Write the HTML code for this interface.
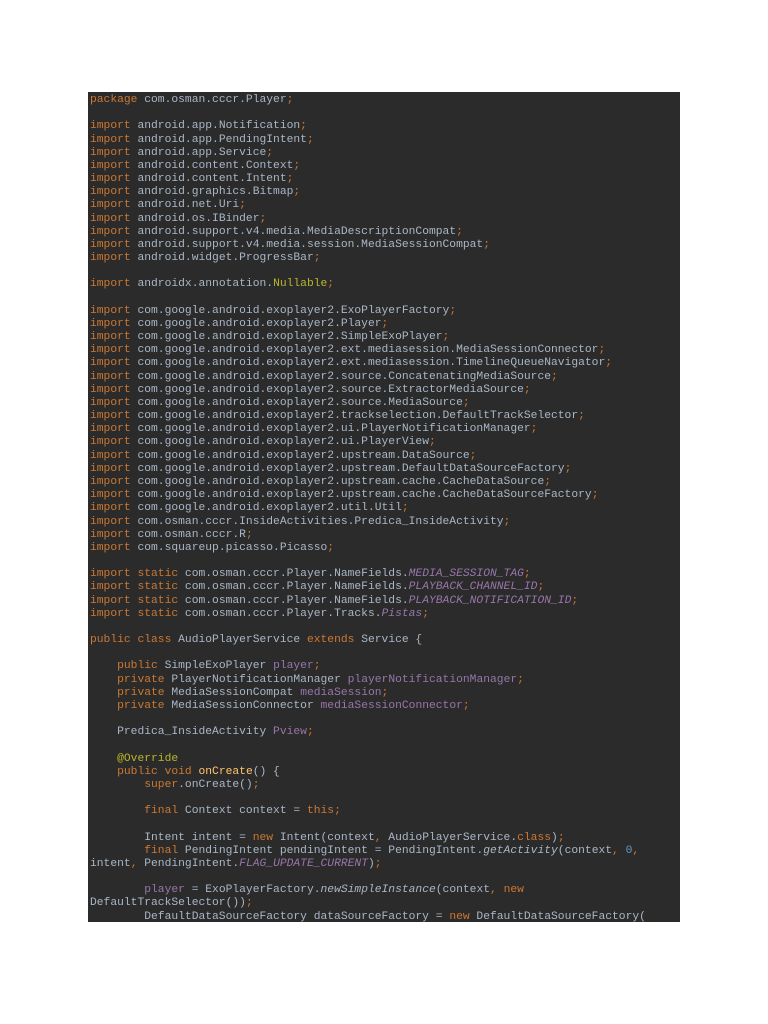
<!DOCTYPE html>
<html><head><meta charset="utf-8"><style>
html,body{margin:0;padding:0;background:#fff;width:768px;height:1024px;overflow:hidden}
#c{position:absolute;left:88px;top:92px;width:592px;height:830px;background:#2b2b2b;box-sizing:border-box;padding-left:2px;padding-top:2px;overflow:hidden}
pre{margin:0;font-family:"Liberation Mono",monospace;font-size:11.3px;line-height:13.17px;color:#a9b7c6;white-space:pre}
.k{color:#cc7832}.p{color:#9876aa}.i{color:#9876aa;font-style:italic}.a{color:#bbb529}.f{color:#ffc66d}.n{color:#6897bb}.m{font-style:italic}
</style></head><body><div id="c"><pre><span class="k">package</span> com.osman.cccr.Player<span class="k">;</span>

<span class="k">import</span> android.app.Notification<span class="k">;</span>
<span class="k">import</span> android.app.PendingIntent<span class="k">;</span>
<span class="k">import</span> android.app.Service<span class="k">;</span>
<span class="k">import</span> android.content.Context<span class="k">;</span>
<span class="k">import</span> android.content.Intent<span class="k">;</span>
<span class="k">import</span> android.graphics.Bitmap<span class="k">;</span>
<span class="k">import</span> android.net.Uri<span class="k">;</span>
<span class="k">import</span> android.os.IBinder<span class="k">;</span>
<span class="k">import</span> android.support.v4.media.MediaDescriptionCompat<span class="k">;</span>
<span class="k">import</span> android.support.v4.media.session.MediaSessionCompat<span class="k">;</span>
<span class="k">import</span> android.widget.ProgressBar<span class="k">;</span>

<span class="k">import</span> androidx.annotation.<span class="a">Nullable</span><span class="k">;</span>

<span class="k">import</span> com.google.android.exoplayer2.ExoPlayerFactory<span class="k">;</span>
<span class="k">import</span> com.google.android.exoplayer2.Player<span class="k">;</span>
<span class="k">import</span> com.google.android.exoplayer2.SimpleExoPlayer<span class="k">;</span>
<span class="k">import</span> com.google.android.exoplayer2.ext.mediasession.MediaSessionConnector<span class="k">;</span>
<span class="k">import</span> com.google.android.exoplayer2.ext.mediasession.TimelineQueueNavigator<span class="k">;</span>
<span class="k">import</span> com.google.android.exoplayer2.source.ConcatenatingMediaSource<span class="k">;</span>
<span class="k">import</span> com.google.android.exoplayer2.source.ExtractorMediaSource<span class="k">;</span>
<span class="k">import</span> com.google.android.exoplayer2.source.MediaSource<span class="k">;</span>
<span class="k">import</span> com.google.android.exoplayer2.trackselection.DefaultTrackSelector<span class="k">;</span>
<span class="k">import</span> com.google.android.exoplayer2.ui.PlayerNotificationManager<span class="k">;</span>
<span class="k">import</span> com.google.android.exoplayer2.ui.PlayerView<span class="k">;</span>
<span class="k">import</span> com.google.android.exoplayer2.upstream.DataSource<span class="k">;</span>
<span class="k">import</span> com.google.android.exoplayer2.upstream.DefaultDataSourceFactory<span class="k">;</span>
<span class="k">import</span> com.google.android.exoplayer2.upstream.cache.CacheDataSource<span class="k">;</span>
<span class="k">import</span> com.google.android.exoplayer2.upstream.cache.CacheDataSourceFactory<span class="k">;</span>
<span class="k">import</span> com.google.android.exoplayer2.util.Util<span class="k">;</span>
<span class="k">import</span> com.osman.cccr.InsideActivities.Predica_InsideActivity<span class="k">;</span>
<span class="k">import</span> com.osman.cccr.R<span class="k">;</span>
<span class="k">import</span> com.squareup.picasso.Picasso<span class="k">;</span>

<span class="k">import static</span> com.osman.cccr.Player.NameFields.<span class="i">MEDIA_SESSION_TAG</span><span class="k">;</span>
<span class="k">import static</span> com.osman.cccr.Player.NameFields.<span class="i">PLAYBACK_CHANNEL_ID</span><span class="k">;</span>
<span class="k">import static</span> com.osman.cccr.Player.NameFields.<span class="i">PLAYBACK_NOTIFICATION_ID</span><span class="k">;</span>
<span class="k">import static</span> com.osman.cccr.Player.Tracks.<span class="i">Pistas</span><span class="k">;</span>

<span class="k">public class</span> AudioPlayerService <span class="k">extends</span> Service {

    <span class="k">public</span> SimpleExoPlayer <span class="p">player</span><span class="k">;</span>
    <span class="k">private</span> PlayerNotificationManager <span class="p">playerNotificationManager</span><span class="k">;</span>
    <span class="k">private</span> MediaSessionCompat <span class="p">mediaSession</span><span class="k">;</span>
    <span class="k">private</span> MediaSessionConnector <span class="p">mediaSessionConnector</span><span class="k">;</span>

    Predica_InsideActivity <span class="p">Pview</span><span class="k">;</span>

    <span class="a">@Override</span>
    <span class="k">public void</span> <span class="f">onCreate</span>() {
        <span class="k">super</span>.onCreate()<span class="k">;</span>

        <span class="k">final</span> Context context = <span class="k">this;</span>

        Intent intent = <span class="k">new</span> Intent(context<span class="k">,</span> AudioPlayerService.<span class="k">class</span>)<span class="k">;</span>
        <span class="k">final</span> PendingIntent pendingIntent = PendingIntent.<span class="m">getActivity</span>(context<span class="k">,</span> <span class="n">0</span><span class="k">,</span>
intent<span class="k">,</span> PendingIntent.<span class="i">FLAG_UPDATE_CURRENT</span>)<span class="k">;</span>

        <span class="p">player</span> = ExoPlayerFactory.<span class="m">newSimpleInstance</span>(context<span class="k">,</span> <span class="k">new</span>
DefaultTrackSelector())<span class="k">;</span>
        DefaultDataSourceFactory dataSourceFactory = <span class="k">new</span> DefaultDataSourceFactory(</pre></div></body></html>
